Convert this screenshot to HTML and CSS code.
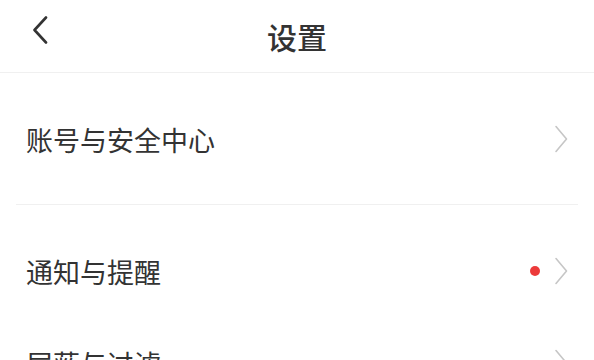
FILE: index.html
```html
<!DOCTYPE html>
<html lang="zh-CN">
<head>
<meta charset="utf-8">
<title>设置</title>
<link rel="stylesheet" href="styles.css">
</head>
<body>
<div class="page">
  <header class="topbar">
    <span class="back">
      <svg width="16" height="28" viewBox="0 0 16 28"><path d="M14 1.5 L2.5 14 L14 26.5" fill="none" stroke="#333" stroke-width="2.6" stroke-linecap="round" stroke-linejoin="round"/></svg>
    </span>
    <h1 class="title">设置</h1>
  </header>

  <section class="group group-first">
    <div class="row">
      <span class="label">账号与安全中心</span>
      <span class="trail">
        <svg class="chev" width="14" height="28" viewBox="0 0 14 28"><path d="M2 1.5 L12.5 14 L2 26.5" fill="none" stroke="#c6c6c6" stroke-width="1.6" stroke-linecap="round" stroke-linejoin="round"/></svg>
      </span>
    </div>
  </section>

  <div class="divider"></div>

  <section class="group">
    <div class="row">
      <span class="label">通知与提醒</span>
      <span class="trail">
        <span class="dot"></span>
        <svg class="chev" width="14" height="28" viewBox="0 0 14 28"><path d="M2 1.5 L12.5 14 L2 26.5" fill="none" stroke="#c6c6c6" stroke-width="1.6" stroke-linecap="round" stroke-linejoin="round"/></svg>
      </span>
    </div>
    <div class="row">
      <span class="label">屏蔽与过滤<span class="faint"></span></span>
      <span class="trail">
        <svg class="chev" width="14" height="28" viewBox="0 0 14 28"><path d="M2 1.5 L12.5 14 L2 26.5" fill="none" stroke="#c6c6c6" stroke-width="1.6" stroke-linecap="round" stroke-linejoin="round"/></svg>
      </span>
    </div>
  </section>
</div>
</body>
</html>
```
FILE: styles.css
```css
html, body {
  margin: 0;
  padding: 0;
  background: #ffffff;
}
body {
  font-family: "Noto Sans CJK SC", "Noto Sans", sans-serif;
  color: #333333;
}
.page {
  width: 594px;
  height: 360px;
  overflow: hidden;
  background: #fff;
}
.topbar {
  position: relative;
  height: 72px;
  border-bottom: 1px solid #f0f0f0;
  display: flex;
  align-items: center;
  justify-content: center;
}
.back {
  position: absolute;
  left: 32px;
  top: 16px;
  display: flex;
}
.title {
  margin: 0;
  font-size: 30px;
  font-weight: 500;
  color: #333;
  line-height: 1;
  letter-spacing: 0;
}
.group {
  padding-top: 20px;
}
.group-first {
  padding-bottom: 19px;
}
.divider {
  height: 1px;
  background: #f0f0f0;
  margin: 0 16px;
}
.row {
  height: 92px;
  display: flex;
  align-items: center;
  justify-content: space-between;
  padding: 0 26px 0 26px;
}
.label {
  font-size: 27px;
  line-height: 1;
  color: #333;
  display: flex;
  align-items: center;
}
.faint {
  display: inline-block;
  width: 5px;
  height: 5px;
  border-radius: 50%;
  background: #ececec;
  margin-left: 6px;
}
.trail {
  display: flex;
  align-items: center;
}
.dot {
  width: 10px;
  height: 10px;
  border-radius: 50%;
  background: #ec3a3a;
  margin-right: 14px;
}
.chev {
  display: block;
}
```
